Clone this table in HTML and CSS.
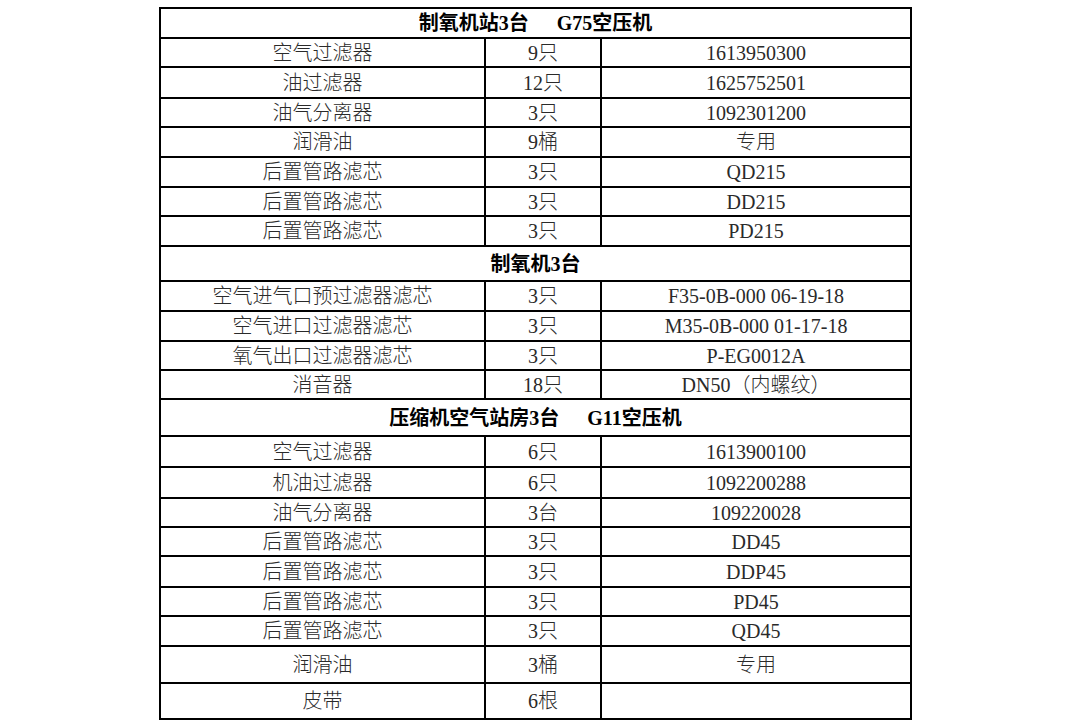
FILE: index.html
```html
<!DOCTYPE html>
<html lang="zh">
<head>
<meta charset="utf-8">
<title>配件清单</title>
<link rel="stylesheet" href="styles.css">
</head>
<body>
<table class="sheet">
  <colgroup>
    <col class="c-name">
    <col class="c-qty">
    <col class="c-code">
  </colgroup>
  <tbody>
    <tr class="h30"><td class="head" colspan="3">制氧机站3台<span class="gap">G75空压机</span></td></tr>
    <tr class="h29"><td>空气过滤器</td><td>9只</td><td>1613950300</td></tr>
    <tr class="h31"><td>油过滤器</td><td>12只</td><td>1625752501</td></tr>
    <tr class="h29"><td>油气分离器</td><td>3只</td><td>1092301200</td></tr>
    <tr class="h30"><td>润滑油</td><td>9桶</td><td>专用</td></tr>
    <tr class="h30"><td>后置管路滤芯</td><td>3只</td><td>QD215</td></tr>
    <tr class="h29"><td>后置管路滤芯</td><td>3只</td><td>DD215</td></tr>
    <tr class="h30"><td>后置管路滤芯</td><td>3只</td><td>PD215</td></tr>
    <tr class="h35"><td class="head" colspan="3">制氧机3台</td></tr>
    <tr class="h30"><td>空气进气口预过滤器滤芯</td><td>3只</td><td>F35-0B-000 06-19-18</td></tr>
    <tr class="h30"><td>空气进口过滤器滤芯</td><td>3只</td><td>M35-0B-000 01-17-18</td></tr>
    <tr class="h29"><td>氧气出口过滤器滤芯</td><td>3只</td><td>P-EG0012A</td></tr>
    <tr class="h29"><td>消音器</td><td>18只</td><td>DN50（内螺纹）</td></tr>
    <tr class="h37"><td class="head" colspan="3">压缩机空气站房3台<span class="gap">G11空压机</span></td></tr>
    <tr class="h31"><td>空气过滤器</td><td>6只</td><td>1613900100</td></tr>
    <tr class="h31"><td>机油过滤器</td><td>6只</td><td>1092200288</td></tr>
    <tr class="h29"><td>油气分离器</td><td>3台</td><td>109220028</td></tr>
    <tr class="h29"><td>后置管路滤芯</td><td>3只</td><td>DD45</td></tr>
    <tr class="h31"><td>后置管路滤芯</td><td>3只</td><td>DDP45</td></tr>
    <tr class="h29"><td>后置管路滤芯</td><td>3只</td><td>PD45</td></tr>
    <tr class="h30"><td>后置管路滤芯</td><td>3只</td><td>QD45</td></tr>
    <tr class="h37"><td>润滑油</td><td>3桶</td><td>专用</td></tr>
    <tr class="h36"><td>皮带</td><td>6根</td><td></td></tr>
  </tbody>
</table>
</body>
</html>
```

FILE: styles.css
```css
html, body {
  margin: 0;
  padding: 0;
  background: #ffffff;
}

body {
  padding: 7px 0 0 159px;
}

.sheet {
  border-collapse: collapse;
  table-layout: fixed;
  width: 751px;
  border: 2px solid #000;
  font-family: "Liberation Serif", "Noto Sans CJK SC", serif;
  font-size: 20px;
  color: #2a2a2a;
}

.c-name { width: 325px; }
.c-qty { width: 116px; }
.c-code { width: 310px; }

.sheet td {
  border: 2px solid #000;
  padding: 0;
  text-align: center;
  vertical-align: middle;
  line-height: 1;
  font-weight: 300;
  white-space: nowrap;
}

.sheet td.head {
  font-family: "Liberation Serif", "Noto Sans CJK SC", serif;
  font-weight: 700;
  color: #000;
}

.gap {
  margin-left: 28px;
}

.h29 { height: 29px; }
.h30 { height: 30px; }
.h31 { height: 31px; }
.h35 { height: 35px; }
.h36 { height: 36px; }
.h37 { height: 37px; }
```
